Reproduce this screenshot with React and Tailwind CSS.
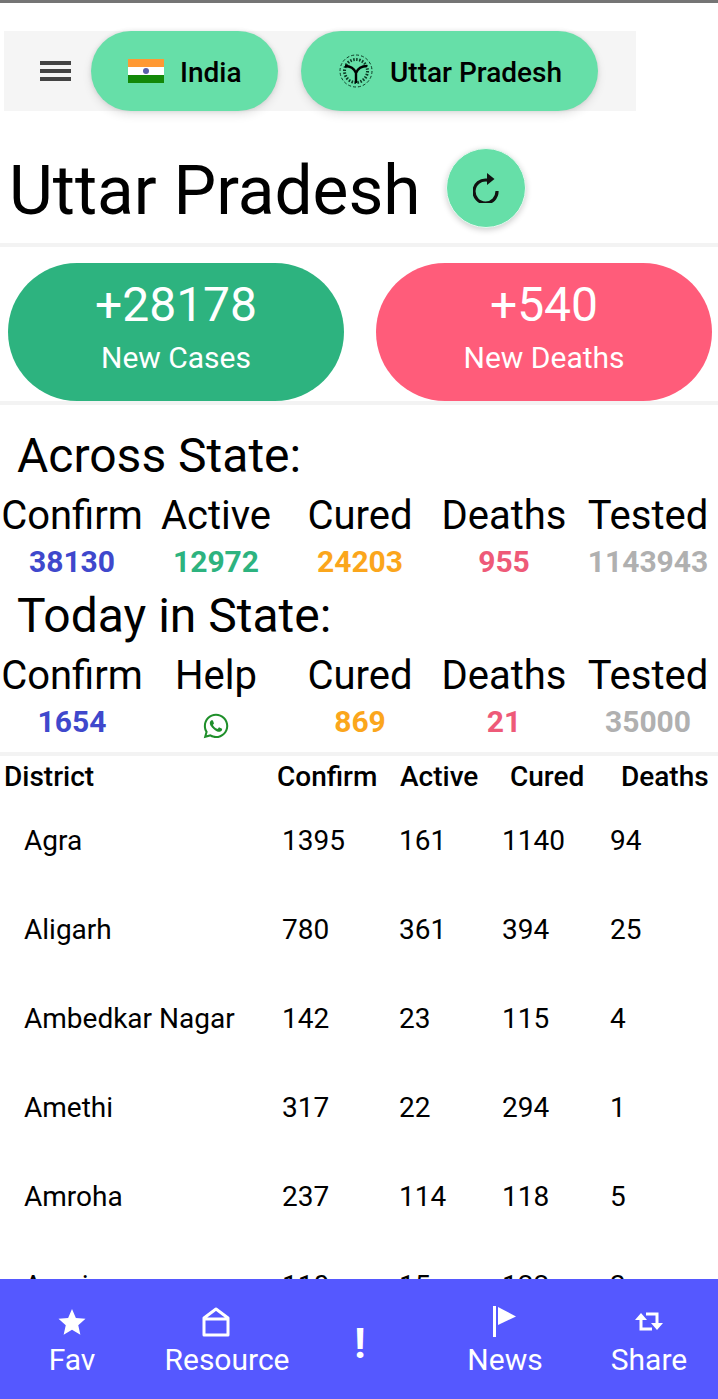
import { FaWhatsapp } from "react-icons/fa";

const ACROSS = [
  ["Confirm", "38130", "text-[#3f48cc]"],
  ["Active", "12972", "text-[#2db37f]"],
  ["Cured", "24203", "text-[#fba61c]"],
  ["Deaths", "955", "text-[#ee5a78]"],
  ["Tested", "1143943", "text-[#b0b0b0]"],
];

const TODAY = [
  ["Confirm", "1654", "text-[#3f48cc]"],
  ["Help", null, ""],
  ["Cured", "869", "text-[#fba61c]"],
  ["Deaths", "21", "text-[#ee5a78]"],
  ["Tested", "35000", "text-[#b0b0b0]"],
];

const DISTRICTS = [
  ["Agra", 1395, 161, 1140, 94],
  ["Aligarh", 780, 361, 394, 25],
  ["Ambedkar Nagar", 142, 23, 115, 4],
  ["Amethi", 317, 22, 294, 1],
  ["Amroha", 237, 114, 118, 5],
  ["Auraiya", 110, 15, 122, 3],
];

function Emblem() {
  return (
    <svg width="34" height="34" viewBox="0 0 34 34" fill="none" stroke="#0b3a24">
      <circle cx="17" cy="17" r="16" strokeWidth="1" strokeDasharray="3 2" />
      <circle cx="17" cy="17" r="11.5" strokeWidth="3" strokeDasharray="1.5 1.5" />
      <path d="M6 12c5 0 9 2 11 7 2-5 6-7 11-7M17 18v11" stroke="#000" strokeWidth="2.4" />
    </svg>
  );
}

function StatRow({ items }) {
  return (
    <div className="grid grid-cols-[repeat(5,144px)]">
      {items.map(([label, value, color]) => (
        <div key={label} className="flex flex-col items-center">
          <span className="text-[40px] leading-[44px] whitespace-nowrap">{label}</span>
          {value ? (
            <span className={`text-[30px] leading-[48px] font-bold ${color}`}>{value}</span>
          ) : (
            <span className="h-[48px] flex items-center pt-2">
              <FaWhatsapp size={28} className="text-[#1f8f2a]" />
            </span>
          )}
        </div>
      ))}
    </div>
  );
}

function NavItem({ icon, label, iconClass = "" }) {
  return (
    <div className="flex flex-col items-center">
      <div className={`h-[35px] flex items-center ${iconClass}`}>{icon}</div>
      <span className="text-[30px] leading-[42px]">{label}</span>
    </div>
  );
}

export default function App() {
  return (
    <div className="h-[1399px] flex flex-col overflow-hidden bg-white text-black font-['Roboto',sans-serif]">
      <div className="h-[3px] bg-[#757575] shrink-0" />

      <div className="flex-1 overflow-hidden">
        <div className="mt-[28px] ml-[4px] w-[632px] h-[80px] bg-[#f5f5f5] flex items-center">
          <div className="w-[87px] pl-[36px]">
            <div className="w-[31px] flex flex-col gap-[4px]">
              <div className="h-[4px] bg-[#444]" />
              <div className="h-[4px] bg-[#444]" />
              <div className="h-[4px] bg-[#444]" />
            </div>
          </div>
          <div className="w-[187px] h-[80px] rounded-full bg-[#66dfa8] shadow-[0_4px_10px_rgba(0,0,0,0.1),0_0_4px_rgba(0,0,0,0.1)] flex items-center pl-[37px] gap-[16px]">
            <div className="w-[36px] h-[24px] flex flex-col">
              <div className="h-[8px] bg-[#ff9933]" />
              <div className="h-[8px] bg-white flex items-center justify-center">
                <div className="w-[6px] h-[6px] rounded-full bg-[#5a5fa8]" />
              </div>
              <div className="h-[8px] bg-[#138808]" />
            </div>
            <span className="text-[28px] font-medium mt-[3px]">India</span>
          </div>
          <div className="ml-[23px] w-[297px] h-[80px] rounded-full bg-[#66dfa8] shadow-[0_4px_10px_rgba(0,0,0,0.1),0_0_4px_rgba(0,0,0,0.1)] flex items-center pl-[38px] gap-[17px]">
            <Emblem />
            <span className="text-[28px] font-medium whitespace-nowrap mt-[3px]">Uttar Pradesh</span>
          </div>
        </div>

        <div className="mt-[37px] h-[79px] pl-[9px] flex items-center">
          <h1 className="text-[67.6px] leading-[79px] font-normal whitespace-nowrap mt-[8px]">Uttar Pradesh</h1>
          <div className="ml-[25px] w-[80px] h-[80px] rounded-full bg-[#66dfa8] border border-[#e8f8f0] shadow-[0_2px_6px_rgba(0,0,0,0.2)] flex items-center justify-center">
            <svg width="26" height="30" viewBox="0 0 26 30" fill="none">
              <path d="M14 7.1A11.5 11.5 0 1 0 24 18" stroke="#111" strokeWidth="3.2" />
              <path d="M14 0l7.5 6-7.5 6z" fill="#111" />
            </svg>
          </div>
        </div>

        <div className="mt-[16px] h-[4px] bg-[#f3f3f3]" />

        <div className="pt-[16px] pl-[8px] grid grid-cols-[336px_336px] gap-[32px]">
          <div className="h-[138px] rounded-full bg-[#2db37f] text-white flex flex-col items-center justify-center">
            <span className="text-[48px] leading-[52px]">+28178</span>
            <span className="text-[30px] leading-[54px]">New Cases</span>
          </div>
          <div className="h-[138px] rounded-full bg-[#ff5c7a] text-white flex flex-col items-center justify-center">
            <span className="text-[48px] leading-[52px]">+540</span>
            <span className="text-[30px] leading-[54px]">New Deaths</span>
          </div>
        </div>

        <div className="h-[4px] bg-[#f3f3f3]" />

        <div className="pl-[17px] pt-[23px] text-[48px] leading-[56px]">Across State:</div>
        <div className="mt-[10px]">
          <StatRow items={ACROSS} />
        </div>
        <div className="pl-[17px] text-[48px] leading-[56px] mt-[2px]">Today in State:</div>
        <div className="mt-[10px]">
          <StatRow items={TODAY} />
        </div>

        <div className="mt-[6px] h-[4px] bg-[#f3f3f3]" />

        <div className="grid grid-cols-[273px_123px_110px_111px_1fr] pl-[4px] h-[40px] items-center text-[28px] font-medium">
          <span>District</span>
          <span>Confirm</span>
          <span>Active</span>
          <span>Cured</span>
          <span>Deaths</span>
        </div>

        <div>
          {DISTRICTS.map((d) => (
            <div key={d[0]} className="grid grid-cols-[258px_117px_103px_108px_1fr] pl-[24px] h-[89px] items-center text-[28px]">
              {d.map((v, i) => (
                <span key={i} className="whitespace-nowrap">{v}</span>
              ))}
            </div>
          ))}
        </div>
      </div>

      <div className="h-[120px] shrink-0 bg-[#5558ff] text-white grid grid-cols-[144px_166px_100px_190px_98px] pt-[25px]">
        <NavItem
          label="Fav"
          icon={
            <svg width="32" height="30" viewBox="0 0 24 24" fill="#fff">
              <path d="M12 1.5l3.1 7.2 7.7.7-5.8 5.1 1.7 7.6L12 18.1l-6.7 4 1.7-7.6-5.8-5.1 7.7-.7z" />
            </svg>
          }
        />
        <NavItem
          label="Resource"
          iconClass="-translate-x-[11px]"
          icon={
            <svg width="28" height="30" viewBox="0 0 28 30" fill="none" stroke="#fff" strokeWidth="3" strokeLinejoin="round">
              <path d="M2 28V11L14 2l12 9v17zM2 12h24" />
            </svg>
          }
        />
        <div className="flex justify-center pt-[20px]">
          <span className="text-[42px] leading-[40px] font-bold">!</span>
        </div>
        <NavItem
          label="News"
          icon={
            <svg width="24" height="31" viewBox="0 0 24 31" fill="#fff" className="-ml-[1px]">
              <rect x="0" y="0" width="3" height="31" />
              <path d="M5 1l18 9.5L5 19z" />
            </svg>
          }
        />
        <NavItem
          label="Share"
          icon={
            <svg width="30" height="21" viewBox="0 0 30 21" fill="none" stroke="#fff" strokeWidth="3">
              <path d="M7 8v10h11M23 13V3H12" />
              <path d="M1 9l6-7 6 7z M17 12l6 7 6-7z" fill="#fff" stroke="none" />
            </svg>
          }
        />
      </div>
    </div>
  );
}
